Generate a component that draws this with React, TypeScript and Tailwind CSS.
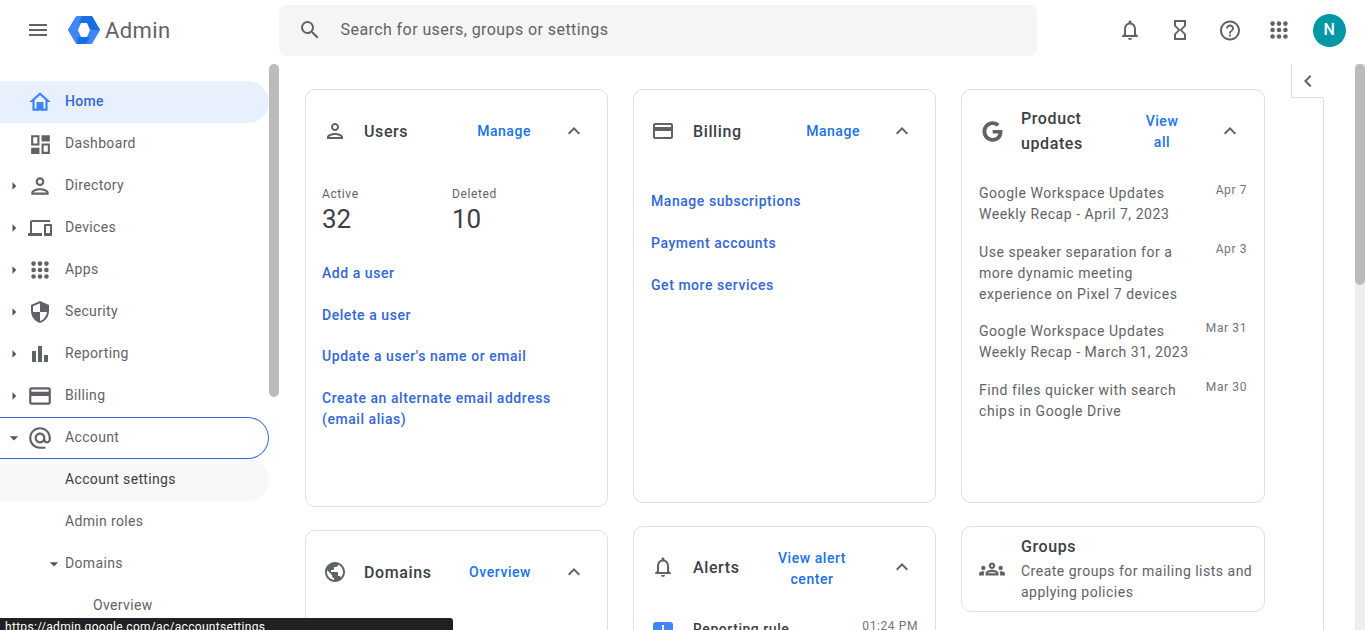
import React from "react";
import {
  MdMenu, MdSearch, MdNotificationsNone, MdOutlineHourglassEmpty, MdHelpOutline,
  MdOutlinePerson, MdOutlineDevices, MdSecurity, MdBarChart, MdOutlineCreditCard,
  MdAlternateEmail, MdArrowRight, MdArrowDropDown, MdExpandLess, MdChevronLeft, MdPublic, MdOutlineGroups,
} from "react-icons/md";
import { FaGoogle } from "react-icons/fa";

function Logo() {
  return (
    <svg width="32" height="28" viewBox="0 0 32 28">
      <path d="M9 1.500h14L30.500 14 23 26.500H9L1.500 14z" fill="#4285f4" stroke="#4285f4" strokeWidth="3" strokeLinejoin="round" />
      <path d="M14 0h10l8 14h-9.500L19 7h-8.500z" fill="#1a6fe0" />
      <path d="M10 21h12l-4 7H9z" fill="#1a6fe0" />
      <path d="M10 14l3-7h6l3 7-3 7h-6z" fill="#fff" />
    </svg>
  );
}

function HomeIcon() {
  return (
    <svg width="26" height="26" viewBox="0 0 24 24">
      <path d="M12 5.690l5 4.500V18h-2v-6H9v6H7v-7.810l5-4.500M12 3L2 12h3v8h6v-6h2v6h6v-8h3L12 3z" fill="#4285f4" />
      <path d="M9 12h6v8H9z" fill="#4285f4" />
    </svg>
  );
}

function DashboardIcon() {
  return (
    <svg width="25" height="25" viewBox="0 0 24 24" fill="currentColor">
      <path d="M9 5v6H5V5h4m10 8v6h-4v-6h4M11 3H3v10h8V3zm10 8h-8v10h8V11z" />
      <path d="M13 3h8v6h-8zM3 15h8v6H3z" />
    </svg>
  );
}

function DotsIcon({ size }: { size: number }) {
  const pts = [5, 12, 19];
  return (
    <svg width={size} height={size} viewBox="0 0 24 24" fill="currentColor">
      {pts.flatMap((y) => pts.map((x) => <circle key={`${x}-${y}`} cx={x} cy={y} r="2.500" />))}
    </svg>
  );
}

type NavProps = {
  icon?: React.ReactNode;
  label: string;
  caret?: "right" | "down";
};

function Caret({ dir }: { dir?: "right" | "down" }) {
  if (dir === "right") return <MdArrowRight size={18} className="text-[#455a64]" />;
  if (dir === "down") return <MdArrowDropDown size={20} className="text-[#455a64]" />;
  return null;
}

function NavRow({ icon, label, caret }: NavProps) {
  return (
    <div className="flex h-[42px] w-[269px] items-center text-[#5f6368]">
      <span className="flex w-[27px] justify-center"><Caret dir={caret} /></span>
      <span className="flex w-[26px] justify-center">{icon}</span>
      <span className="ml-[12px] pb-[2px]">{label}</span>
    </div>
  );
}

function Sidebar() {
  return (
    <aside className="flex w-[280px] shrink-0">
      <nav className="w-[269px] pt-[21px] text-[14px] leading-[21px] tracking-[0.35px]">
        <div className="flex h-[42px] w-[269px] items-center rounded-r-full bg-[#e8f0fe] font-medium text-[#3367d6]">
          <span className="w-[27px]" />
          <span className="flex w-[26px] justify-center"><HomeIcon /></span>
          <span className="ml-[12px] pb-[2px]">Home</span>
        </div>
        <NavRow icon={<DashboardIcon />} label="Dashboard" />
        <NavRow icon={<MdOutlinePerson size={26} />} label="Directory" caret="right" />
        <NavRow icon={<MdOutlineDevices size={24} />} label="Devices" caret="right" />
        <NavRow icon={<DotsIcon size={22} />} label="Apps" caret="right" />
        <NavRow icon={<MdSecurity size={24} />} label="Security" caret="right" />
        <NavRow icon={<MdBarChart size={24} />} label="Reporting" caret="right" />
        <NavRow icon={<MdOutlineCreditCard size={26} />} label="Billing" caret="right" />
        <div className="flex h-[42px] w-[269px] items-center rounded-r-full border border-l-0 border-[#3367d6] text-[#5f6368]">
          <span className="flex w-[27px] justify-center"><Caret dir="down" /></span>
          <span className="flex w-[26px] justify-center"><MdAlternateEmail size={26} /></span>
          <span className="ml-[12px] pb-[2px]">Account</span>
        </div>
        <div className="flex h-[42px] w-[269px] items-center rounded-r-full bg-[#f8f8f8] pb-[2px] pl-[65px] text-[#3c4043]">Account settings</div>
        <div className="flex h-[42px] w-[269px] items-center pb-[2px] pl-[65px] text-[#5f6368]">Admin roles</div>
        <div className="flex h-[42px] w-[269px] items-center pl-[44px] text-[#5f6368]">
          <span className="flex w-[21px] justify-start"><Caret dir="down" /></span>
          <span className="pb-[2px]">Domains</span>
        </div>
        <div className="flex h-[42px] w-[269px] items-center pb-[2px] pl-[93px] text-[#5f6368]">Overview</div>
      </nav>
      <div className="mt-[4px] h-[333px] w-[10px] rounded-full bg-[#bbbbbb]" />
    </aside>
  );
}

function Card({ className, children }: { className: string; children: React.ReactNode }) {
  return <section className={`shrink-0 rounded-[10px] border border-[#e0e0e0] bg-white ${className}`}>{children}</section>;
}

function CardHeader({
  icon, title, link, titleClass = "ml-[17px]", h = "h-[82px]", chevronClass = "ml-[31px]",
}: {
  icon: React.ReactNode; title: React.ReactNode; link: React.ReactNode; titleClass?: string; h?: string; chevronClass?: string;
}) {
  return (
    <div className={`flex items-center pl-[17px] pr-[21px] ${h}`}>
      <span className="flex w-[24px] shrink-0 justify-center text-[#5f6368]">{icon}</span>
      <div className={`flex-1 text-[16px] font-medium leading-[25px] tracking-[0.6px] text-[#3c4043] ${titleClass}`}>{title}</div>
      <div className="text-center text-[14px] font-medium leading-[21px] tracking-[0.55px] text-[#1a73e8]">{link}</div>
      <span className={`flex w-[24px] shrink-0 justify-center text-[#5f6368] ${chevronClass}`}><MdExpandLess size={24} /></span>
    </div>
  );
}

function LinkText({ children }: { children: React.ReactNode }) {
  return <div className="text-[14px] font-medium leading-[21px] tracking-[0.55px] text-[#3367d6]">{children}</div>;
}

function UsersCard() {
  return (
    <Card className="h-[418px] w-[303px]">
      <CardHeader icon={<MdOutlinePerson size={24} />} title="Users" link="Manage" />
      <div className="px-[16px] pt-[13px]">
        <div className="flex">
          <div className="w-[130px]">
            <div className="text-[12px] leading-[18px] tracking-[0.6px] text-[#5f6368]">Active</div>
            <div className="-mt-[1px] text-[26px] leading-[34px] text-[#3c4043]">32</div>
          </div>
          <div>
            <div className="text-[12px] leading-[18px] tracking-[0.6px] text-[#5f6368]">Deleted</div>
            <div className="-mt-[1px] text-[26px] leading-[34px] text-[#3c4043]">10</div>
          </div>
        </div>
        <div className="mt-[27px] flex flex-col gap-[20.500px]">
          <LinkText>Add a user</LinkText>
          <LinkText>Delete a user</LinkText>
          <LinkText>Update a user's name or email</LinkText>
          <LinkText>Create an alternate email address<br />(email alias)</LinkText>
        </div>
      </div>
    </Card>
  );
}

function BillingCard() {
  return (
    <Card className="h-[414px] w-[303px]">
      <CardHeader icon={<MdOutlineCreditCard size={26} />} title="Billing" link="Manage" titleClass="ml-[18px]" chevronClass="ml-[30px]" />
      <div className="flex flex-col gap-[21px] px-[17px] pt-[19px]">
        <LinkText>Manage subscriptions</LinkText>
        <LinkText>Payment accounts</LinkText>
        <LinkText>Get more services</LinkText>
      </div>
    </Card>
  );
}

const news = [
  { text: <>Google Workspace Updates<br />Weekly Recap - April 7, 2023</>, date: "Apr 7" },
  { text: <>Use speaker separation for a<br />more dynamic meeting<br />experience on Pixel 7 devices</>, date: "Apr 3" },
  { text: <>Google Workspace Updates<br />Weekly Recap - March 31, 2023</>, date: "Mar 31" },
  { text: <>Find files quicker with search<br />chips in Google Drive</>, date: "Mar 30" },
];

function UpdatesCard() {
  return (
    <Card className="h-[414px] w-[304px]">
      <div className="flex h-[82px] items-center pl-[18px] pr-[22px]">
        <span className="flex w-[24px] shrink-0 justify-center text-[#5f6368]"><FaGoogle size={21} /></span>
        <div className="ml-[17px] w-[116px] text-[16px] font-medium leading-[25px] tracking-[0.6px] text-[#3c4043]">Product<br />updates</div>
        <div className="mt-[1px] w-[50px] text-center text-[14px] font-medium leading-[21px] tracking-[0.55px] text-[#1a73e8]">View<br />all</div>
        <span className="ml-[31px] flex w-[24px] shrink-0 justify-center text-[#5f6368]"><MdExpandLess size={24} /></span>
      </div>
      <div className="flex flex-col gap-[16.500px] pl-[17px] pr-[17px] pt-[11px]">
        {news.map((n) => (
          <div key={n.date} className="flex justify-between text-[14px] leading-[21px] tracking-[0.55px] text-[#5f6368]">
            <div>{n.text}</div>
            <div className="-mt-[3px] text-[12px] tracking-[0.6px] text-[#70757a]">{n.date}</div>
          </div>
        ))}
      </div>
    </Card>
  );
}

function DomainsCard() {
  return (
    <Card className="mt-[23px] h-[300px] w-[303px]">
      <CardHeader icon={<MdPublic size={24} />} title="Domains" link="Overview" />
    </Card>
  );
}

function AlertsCard() {
  return (
    <Card className="mt-[23px] h-[300px] w-[303px]">
      <CardHeader
        icon={<MdNotificationsNone size={26} />}
        title="Alerts"
        h="h-[80px]"
        titleClass="ml-[18px]"
        chevronClass="ml-[42px]"
        link={<span className="mt-[4px] block w-[72px]">View alert<br />center</span>}
      />
      <div className="flex gap-[20px] pl-[19px] pr-[17px] pt-[12px]">
        <span className="relative mt-[3px] h-[20px] w-[20px] shrink-0 rounded-[3px] bg-[#4285f4]">
          <span className="absolute left-[9px] top-[3px] h-[6px] w-[2px] bg-white" />
        </span>
        <div className="flex-1 text-[14px] font-medium leading-[21px] tracking-[0.55px] text-[#3c4043]">Reporting rule</div>
        <div className="-mt-[3px] text-[12px] leading-[21px] tracking-[0.6px] text-[#70757a]">01:24 PM</div>
      </div>
    </Card>
  );
}

function GroupsCard() {
  return (
    <Card className="mt-[23px] flex h-[86px] w-[304px] items-center">
      <span className="ml-[17px] flex w-[26px] shrink-0 justify-center text-[#5f6368]"><MdOutlineGroups size={28} /></span>
      <div className="ml-[16px] self-start pt-[7px]">
        <div className="text-[16px] font-medium leading-[25px] tracking-[0.6px] text-[#3c4043]">Groups</div>
        <div className="mt-[2px] text-[14px] leading-[21px] tracking-[0.5px] text-[#5f6368]">Create groups for mailing lists and<br />applying policies</div>
      </div>
    </Card>
  );
}

export default function App() {
  return (
    <div className="relative flex h-[630px] w-[1365px] flex-col overflow-hidden bg-white [font-family:Roboto,'Liberation_Sans',sans-serif]">
      <header className="flex h-[60px] shrink-0 items-center">
        <span className="ml-[25px] flex w-[25px] justify-center text-[#5f6368]"><MdMenu size={24} /></span>
        <span className="ml-[18px]"><Logo /></span>
        <span className="ml-[5px] pt-[1px] text-[22px] tracking-[0.4px] text-[#5f6368]">Admin</span>
        <div className="ml-[108px] flex h-[51px] w-[758px] items-center rounded-[8px] bg-[#f5f5f5] pl-[19px] text-[16px] tracking-[0.42px] text-[#5f6368]">
          <MdSearch size={24} />
          <span className="ml-[19px]">Search for users, groups or settings</span>
        </div>
        <div className="ml-[81px] flex items-center gap-[26px] text-[#5f6368]">
          <span className="flex w-[24px] justify-center"><MdNotificationsNone size={26} /></span>
          <span className="flex w-[24px] justify-center"><MdOutlineHourglassEmpty size={26} /></span>
          <span className="flex w-[24px] justify-center"><MdHelpOutline size={25} /></span>
          <span className="-ml-[1px] flex w-[24px] justify-center"><DotsIcon size={22} /></span>
        </div>
        <div className="ml-[22px] flex h-[33px] w-[33px] items-center justify-center rounded-full bg-[#0097a7] text-[16px] font-medium text-white">N</div>
      </header>
      <div className="flex min-h-0 flex-1">
        <Sidebar />
        <main className="ml-[25px] flex shrink-0 gap-[25px] pt-[29px]">
          <div className="flex flex-col">
            <UsersCard />
            <DomainsCard />
          </div>
          <div className="flex flex-col">
            <BillingCard />
            <AlertsCard />
          </div>
          <div className="flex flex-col">
            <UpdatesCard />
            <GroupsCard />
          </div>
        </main>
        <div className="ml-[26px] mt-[4px] flex h-[34px] w-[32px] shrink-0 items-center justify-center border-b border-l border-[#e0e0e0] text-[#5f6368]">
          <MdChevronLeft size={24} />
        </div>
        <div className="mt-[38px] w-[32px] shrink-0 border-l border-[#e0e0e0]" />
        <div className="mt-[4px] w-[10px] shrink-0 bg-[#eeeeee]">
          <div className="h-[221px] rounded-full bg-[#bbbbbb]" />
        </div>
      </div>
      <div className="absolute bottom-0 left-0 h-[12px] w-[453px] overflow-hidden rounded-tr-[3px] bg-[#202124] pl-[5px] text-[12px] leading-[18px] tracking-[0.3px] text-white">
        https://admin.google.com/ac/accountsettings
      </div>
    </div>
  );
}
